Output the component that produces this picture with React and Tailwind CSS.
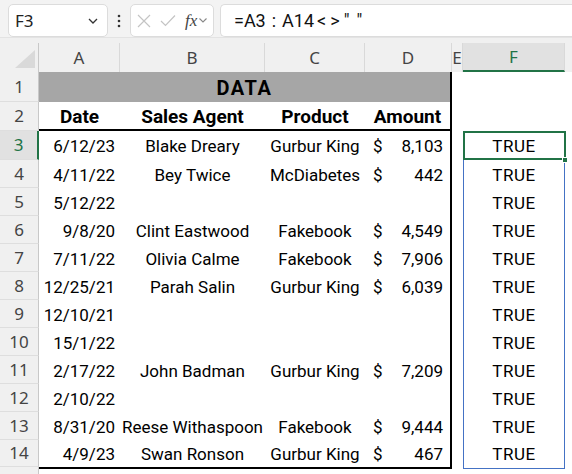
import React from "react";

const data = [
  { n: 3, a: "6/12/23", b: "Blake Dreary", c: "Gurbur King", d: "8,103" },
  { n: 4, a: "4/11/22", b: "Bey Twice", c: "McDiabetes", d: "442" },
  { n: 5, a: "5/12/22", b: "", c: "", d: "" },
  { n: 6, a: "9/8/20", b: "Clint Eastwood", c: "Fakebook", d: "4,549" },
  { n: 7, a: "7/11/22", b: "Olivia Calme", c: "Fakebook", d: "7,906" },
  { n: 8, a: "12/25/21", b: "Parah Salin", c: "Gurbur King", d: "6,039" },
  { n: 9, a: "12/10/21", b: "", c: "", d: "" },
  { n: 10, a: "15/1/22", b: "", c: "", d: "" },
  { n: 11, a: "2/17/22", b: "John Badman", c: "Gurbur King", d: "7,209" },
  { n: 12, a: "2/10/22", b: "", c: "", d: "" },
  { n: 13, a: "8/31/20", b: "Reese Withaspoon", c: "Fakebook", d: "9,444" },
  { n: 14, a: "4/9/23", b: "Swan Ronson", c: "Gurbur King", d: "467" },
];

const heightClass = (n) =>
  n === 1 ? "h-[30px]" : n === 2 || n === 3 ? "h-[29px]" : n === 14 ? "h-[27px]" : "h-[28px]";

const uiFont = { fontFamily: '"Noto Sans", "Open Sans", sans-serif' };

function Toolbar() {
  return (
    <div className="h-[38px] bg-[#f3f3f3] flex items-start pt-[4px] pl-[8px] border-b border-[#e3e3e3]" style={uiFont}>
      <div className="w-[100px] h-[33px] bg-white border border-[#dcdcdc] rounded-[5px] flex items-center pl-[6px] pr-[8px] justify-between">
        <span className="text-[17px] text-[#222]">F3</span>
        <svg width="12" height="8" viewBox="0 0 12 8">
          <path d="M2 2 L6 6 L10 2" fill="none" stroke="#333" strokeWidth="1.3" />
        </svg>
      </div>
      <div className="w-[22px] h-[33px] flex items-center justify-center">
        <svg width="4" height="14" viewBox="0 0 4 14">
          <circle cx="2" cy="2" r="1.3" fill="#333" />
          <circle cx="2" cy="7" r="1.3" fill="#333" />
          <circle cx="2" cy="12" r="1.3" fill="#333" />
        </svg>
      </div>
      <div className="w-[84px] h-[33px] bg-white border border-[#dcdcdc] rounded-[5px] flex items-center pl-[6px] gap-[9px]">
        <svg width="14" height="14" viewBox="0 0 14 14">
          <path d="M1 1 L13 13 M13 1 L1 13" stroke="#c4c4c4" strokeWidth="1.2" />
        </svg>
        <svg width="16" height="13" viewBox="0 0 16 13">
          <path d="M1 7 L5.5 11.5 L15 1.5" fill="none" stroke="#c4c4c4" strokeWidth="1.2" />
        </svg>
        <div className="flex items-center gap-[1px]">
          <span className="italic text-[17px] text-[#444] leading-none" style={{ fontFamily: '"Liberation Serif", serif' }}>fx</span>
          <svg width="10" height="7" viewBox="0 0 10 7">
            <path d="M1.5 1.5 L5 5 L8.5 1.5" fill="none" stroke="#888" strokeWidth="1.1" />
          </svg>
        </div>
      </div>
      <div className="ml-[6px] flex-1 h-[33px] bg-white border border-[#dcdcdc] rounded-l-[5px] border-r-0 flex items-center pl-[13px]">
        <span className="text-[18px] text-[#111] flex items-center" style={{ fontFamily: "Roboto, sans-serif" }}>
          <span>=A3</span>
          <span className="ml-[6px] mr-[6px]">:</span>
          <span>A14</span>
          <span className="ml-[3px]">&lt;</span>
          <span className="ml-[4px]">&gt;</span>
          <span className="ml-[4px]">"</span>
          <span className="ml-[7px]">"</span>
        </span>
      </div>
    </div>
  );
}

function ColHeaders() {
  const cols = [
    { l: "A", w: "w-[81px]" },
    { l: "B", w: "w-[145px]" },
    { l: "C", w: "w-[100px]" },
    { l: "D", w: "w-[87px]" },
    { l: "E", w: "w-[11px]" },
  ];
  return (
    <div className="bg-[#f0f0f0] pt-[5px]" style={uiFont}>
      <div className="flex h-[29px]">
        <div className="w-[39px] border-r border-[#c8c8c8] flex items-end justify-end pr-[3px] pb-[4px]">
          <svg width="20" height="18" viewBox="0 0 20 18">
            <polygon points="20,0 20,18 0,18" fill="#d9d9d9" />
          </svg>
        </div>
        {cols.map((c) => (
          <div key={c.l} className={`${c.w} border-r border-[#d9d9d9] flex items-center justify-center text-[17px] text-[#444] overflow-hidden`}>
            {c.l}
          </div>
        ))}
        <div className="w-[102px] bg-[#e1e1e1] border-b-2 border-[#217346] border-r border-r-[#d9d9d9] flex items-center justify-center text-[17px] text-[#217346]">
          F
        </div>
        <div className="w-[7px]" />
      </div>
    </div>
  );
}

function RowHeaders() {
  const nums = Array.from({ length: 14 }, (_, i) => i + 1);
  return (
    <div className="w-[39px] shrink-0 bg-[#f0f0f0] flex flex-col" style={uiFont}>
      {nums.map((n) => (
        <div
          key={n}
          className={`${heightClass(n)} border-b border-[#dedede] flex items-center justify-center text-[17px] ${
            n === 3 ? "bg-[#e1e1e1] text-[#217346] border-r-2 border-r-[#217346]" : "text-[#444] border-r border-r-[#c8c8c8]"
          }`}
        >
          {n}
        </div>
      ))}
      <div className="flex-1 border-r border-r-[#c8c8c8]" />
    </div>
  );
}

const cellFont = { fontFamily: "Roboto, sans-serif" };

function Table() {
  return (
    <div className="w-[413px] shrink-0 self-start border-r-2 border-b-2 border-black" style={cellFont}>
      <div className="h-[30px] bg-[#a6a6a6] flex items-center justify-center pt-[2px] text-[20px] font-bold text-black tracking-[1.5px]">
        DATA
      </div>
      <div className="h-[29px] border-b-2 border-black flex pt-[4px] text-[19px] font-bold text-black">
        <div className="w-[81px] flex items-center justify-center">Date</div>
        <div className="w-[145px] flex items-center justify-center">Sales Agent</div>
        <div className="w-[100px] flex items-center justify-center">Product</div>
        <div className="w-[85px] flex items-center justify-center">Amount</div>
      </div>
      {data.map((r) => (
        <div key={r.n} className={`${heightClass(r.n)} flex pt-[3px] text-[17px] text-black`}>
          <div className="w-[81px] flex items-center justify-end pr-[5px]">{r.a}</div>
          <div className="w-[145px] flex items-center justify-center whitespace-nowrap">{r.b}</div>
          <div className="w-[100px] flex items-center justify-center whitespace-nowrap">{r.c}</div>
          <div className="w-[85px] flex items-center justify-between pl-[8px] pr-[7px]">
            {r.d ? (
              <>
                <span>$</span>
                <span>{r.d}</span>
              </>
            ) : null}
          </div>
        </div>
      ))}
    </div>
  );
}

function ColumnF() {
  return (
    <div className="w-[102px] shrink-0 relative" style={cellFont}>
      <div className="h-[30px]" />
      <div className="h-[29px]" />
      {data.map((r) => (
        <div key={r.n} className={`${heightClass(r.n)} flex items-center justify-center pt-[3px] text-[17px] tracking-[0.6px] text-black`}>
          TRUE
        </div>
      ))}
      <div className="absolute left-0 top-[59px] w-[102px] h-[338px] border border-[#4472c4] pointer-events-none" />
      <div className="absolute left-0 top-[59px] w-[103px] h-[29px] border-2 border-[#217346] pointer-events-none" />
      <div className="absolute left-[99px] top-[85px] w-[6px] h-[6px] bg-[#217346] border border-white pointer-events-none" />
    </div>
  );
}

export default function App() {
  return (
    <div className="w-[572px] h-[474px] overflow-hidden bg-white flex flex-col">
      <Toolbar />
      <ColHeaders />
      <div className="flex flex-1">
        <RowHeaders />
        <Table />
        <div className="w-[11px] shrink-0" />
        <ColumnF />
        <div className="w-[7px] shrink-0" />
      </div>
    </div>
  );
}
